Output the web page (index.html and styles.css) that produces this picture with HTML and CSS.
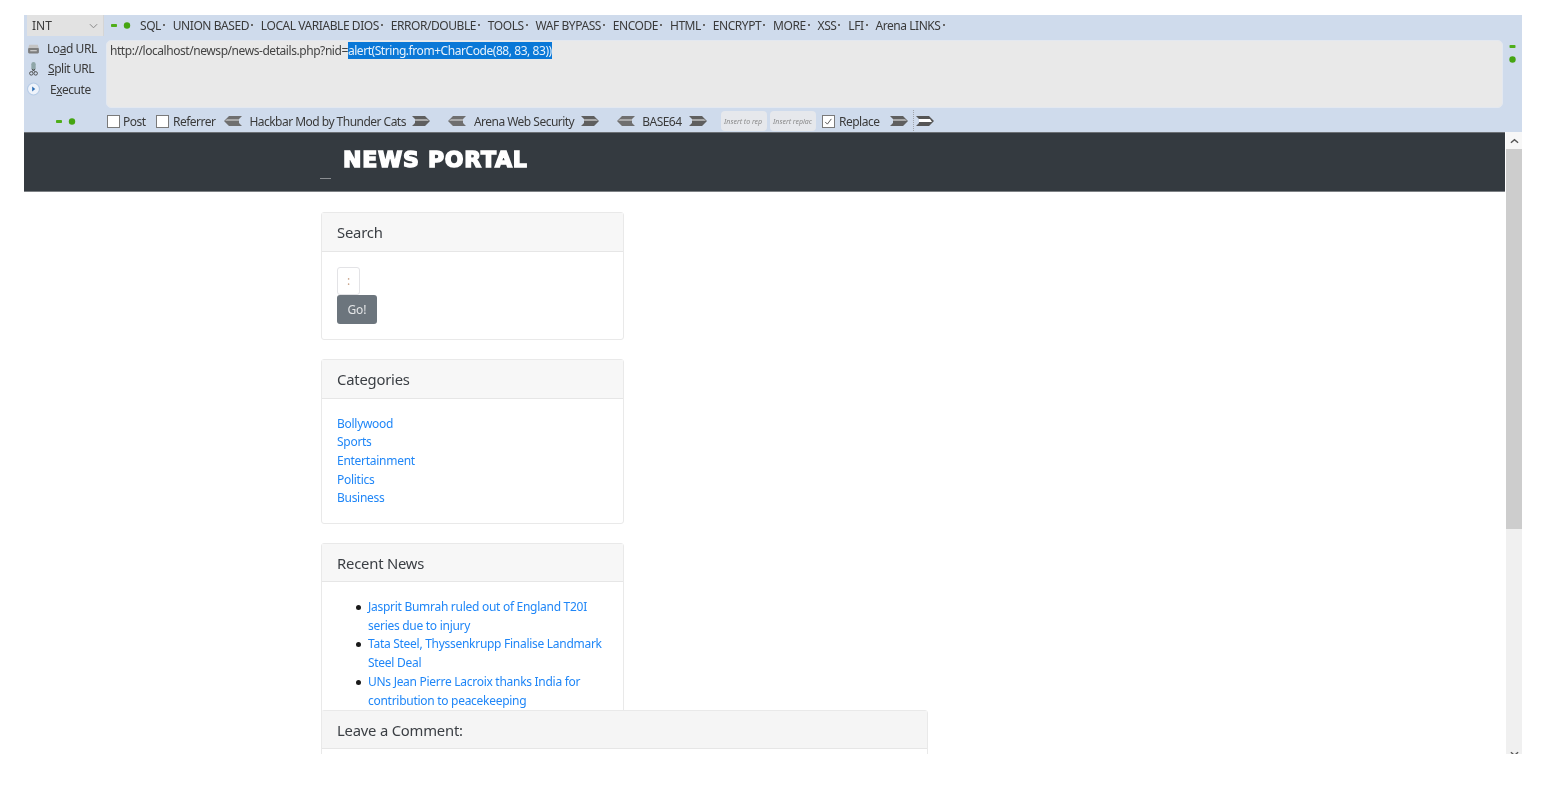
FILE: index.html
```html
<!DOCTYPE html>
<html lang="en">
<head>
<meta charset="utf-8">
<title>News Portal</title>
<link rel="stylesheet" href="styles.css">
</head>
<body>
<svg class="defs" width="0" height="0" aria-hidden="true">
  <symbol id="chev-l" viewBox="0 0 18 10"><path d="M5 0H18L15 3V7L18 10H5L0 5Z" fill="#6f6f6f"/><path d="M3 3H15V5H1Z" fill="#a9a9a9"/></symbol>
  <symbol id="chev-r" viewBox="0 0 18 10"><path d="M0 0H13L18 5L13 10H0L3 7V3Z" fill="#5f5f5f"/><path d="M3 3H15L17 5H3Z" fill="#a9a9a9"/></symbol>
  <symbol id="chev-w" viewBox="0 0 18 10"><path d="M0 0H13L18 5L13 10H0L3 7V3Z" fill="#555"/><path d="M3 3H14L16 6H3Z" fill="#fff"/></symbol>
  <symbol id="dots" viewBox="0 0 20 7"><rect x="0" y="2" width="6" height="3" rx=".8" fill="#4fae1a"/><circle cx="16" cy="3.500" r="3.200" fill="#45a512"/></symbol>
  <symbol id="dots-v" viewBox="0 0 7 20"><rect x=".5" y="0" width="6" height="3" rx=".8" fill="#4fae1a"/><circle cx="3.500" cy="14.500" r="3.200" fill="#45a512"/></symbol>
</svg>
<div class="window">
  <div class="hackbar">
    <div class="row-menu">
      <div class="select">INT<svg class="select-arrow" viewBox="0 0 10 6"><path d="M1 1L5 5L9 1" fill="none" stroke="#888" stroke-width="1.100"/></svg></div>
      <svg class="dots"><use href="#dots"/></svg>
      <nav class="menu">
        <span class="menu-item">SQL</span><span class="menu-item">UNION BASED</span><span class="menu-item">LOCAL VARIABLE DIOS</span><span class="menu-item">ERROR/DOUBLE</span><span class="menu-item">TOOLS</span><span class="menu-item">WAF BYPASS</span><span class="menu-item">ENCODE</span><span class="menu-item">HTML</span><span class="menu-item">ENCRYPT</span><span class="menu-item">MORE</span><span class="menu-item">XSS</span><span class="menu-item">LFI</span><span class="menu-item">Arena LINKS</span>
      </nav>
    </div>
    <div class="row-url">
      <div class="actions">
        <div class="action"><svg class="action-icon" viewBox="0 0 12 12"><path d="M2 3H10L11 7H1Z" fill="#c4c4c4"/><rect x="1" y="6" width="10" height="5" rx="1" fill="#7d7d7d"/><rect x="3" y="8" width="6" height="1" fill="#d8d8d8"/></svg><span class="action-text load">Lo<u>a</u>d URL</span></div>
        <div class="action"><svg class="action-icon" viewBox="0 0 12 16"><rect x="3.500" y="0" width="5" height="9" rx="2.500" fill="#8fa6a8"/><circle cx="3.500" cy="13" r="2" fill="none" stroke="#444"/><circle cx="8.500" cy="13" r="2" fill="none" stroke="#444"/><path d="M4 11L8 8M8 11L4 8" stroke="#444"/></svg><span class="action-text split"><u>S</u>plit URL</span></div>
        <div class="action"><svg class="action-icon" viewBox="0 0 12 12"><circle cx="6" cy="6" r="5.500" fill="#eef3fb" stroke="#b5cbe6"/><path d="M4.800 3.800L7.600 6L4.800 8.200Z" fill="#2f6fb5"/></svg><span class="action-text execute">E<u>x</u>ecute</span></div>
      </div>
      <div class="url-box"><span>http://localhost/newsp/news-details.php?nid=</span><span class="selected">alert(String.from+CharCode(88, 83, 83))</span></div>
      <svg class="dots-v"><use href="#dots-v"/></svg>
    </div>
    <div class="row-tools">
      <svg class="dots tools-dots"><use href="#dots"/></svg>
      <span class="check"></span><span class="tool-label post">Post</span>
      <span class="check"></span><span class="tool-label referrer">Referrer</span>
      <svg class="chev"><use href="#chev-l"/></svg><span class="tool-label group">Hackbar Mod by Thunder Cats</span><svg class="chev"><use href="#chev-r"/></svg>
      <svg class="chev c3"><use href="#chev-l"/></svg><span class="tool-label group arena">Arena Web Security</span><svg class="chev"><use href="#chev-r"/></svg>
      <svg class="chev c3"><use href="#chev-l"/></svg><span class="tool-label group base">BASE64</span><svg class="chev"><use href="#chev-r"/></svg>
      <span class="insert first">Insert to rep</span><span class="insert">Insert replac</span>
      <span class="check checked"><svg viewBox="0 0 12 12"><path d="M2.500 6.500L5 9L9.500 3" fill="none" stroke="#555" stroke-width="1.100"/></svg></span><span class="tool-label replace">Replace</span>
      <svg class="chev c4"><use href="#chev-r"/></svg><span class="sep"></span><svg class="chev"><use href="#chev-w"/></svg>
    </div>
  </div>
  <div class="viewport">
    <div class="page">
      <header class="site-header"><span class="broken"></span><span class="brand">NEWS PORTAL</span></header>
      <main class="content">
        <aside class="sidebar">
          <section class="card">
            <h5 class="card-header">Search</h5>
            <div class="card-body search-body">
              <div class="search-input"><span>:</span></div>
              <button class="go">Go!</button>
            </div>
          </section>
          <section class="card">
            <h5 class="card-header">Categories</h5>
            <div class="card-body">
              <a class="link block" href="#">Bollywood</a>
              <a class="link block" href="#">Sports</a>
              <a class="link block" href="#">Entertainment</a>
              <a class="link block" href="#">Politics</a>
              <a class="link block" href="#">Business</a>
            </div>
          </section>
          <section class="card">
            <h5 class="card-header">Recent News</h5>
            <div class="card-body">
              <ul class="news">
                <li><a class="link" href="#">Jasprit Bumrah ruled out of England T20I series due to injury</a></li>
                <li><a class="link" href="#">Tata Steel, Thyssenkrupp Finalise Landmark Steel Deal</a></li>
                <li><a class="link" href="#">UNs Jean Pierre Lacroix thanks India for contribution to peacekeeping</a></li>
              </ul>
            </div>
          </section>
        </aside>
        <section class="card comment">
          <h5 class="card-header">Leave a Comment:</h5>
        </section>
      </main>
    </div>
    <div class="scrollbar">
      <div class="arrow"><svg viewBox="0 0 10 6"><path d="M1 5L5 1.500L9 5" fill="none" stroke="#555" stroke-width="1.500"/></svg></div>
      <div class="thumb"></div>
      <div class="track"></div>
      <div class="arrow-bottom"><svg viewBox="0 0 10 6"><path d="M1 1L5 4.500L9 1" fill="none" stroke="#555" stroke-width="1.500"/></svg></div>
    </div>
  </div>
</div>
</body>
</html>
```
FILE: styles.css
```css
* { box-sizing: border-box; }
html, body { margin: 0; height: 100%; background: #fff; }
body {
  padding: 15px 27px 0 24px;
  font-family: "Noto Sans", "Open Sans", sans-serif;
  font-size: 12px;
  color: #3a3a3a;
  overflow: hidden;
  filter: blur(.35px);
}
.defs { position: absolute; }
.window { height: 739px; display: flex; flex-direction: column; }

.hackbar { height: 117px; background: #cfdbec; flex: none; display: flex; flex-direction: column; }
.row-menu { height: 24px; display: flex; align-items: flex-start; padding-left: 3px; flex: none; }
.select {
  width: 77px; height: 21px; background: #e2e2e2; border-right: 1px solid #d5d5d5;
  display: flex; align-items: center; justify-content: space-between; padding: 0 5px; font-size: 12px;
}
.select-arrow { width: 9px; height: 6px; }
.dots { width: 20px; height: 7px; flex: none; }
.row-menu .dots { margin: 7px 9px 0 7px; }
.menu { display: flex; gap: 7.850px; height: 21px; letter-spacing: -.44px; white-space: nowrap; }
.menu-item { display: flex; align-items: center; gap: 2px; }
.menu-item::after { content: ""; width: 2px; height: 2px; background: #666; margin-top: -2px; }

.row-url { height: 70px; display: flex; flex: none; }
.actions { width: 82px; flex: none; margin-top: -1px; display: flex; flex-direction: column; }
.action { height: 20.500px; display: flex; align-items: center; }
.action-icon { width: 13px; height: 14px; margin-left: 3px; flex: none; }
.action-text { letter-spacing: -.45px; }
.load { margin-left: 7px; }
.split { margin-left: 8px; }
.execute { margin-left: 10px; }
.url-box {
  flex: 1; margin-top: 1px; height: 68px; background: #e9e9e9; border: 1px solid #e3e8f0; border-radius: 5px;
  padding: 1px 3px; font-size: 12px; letter-spacing: -.44px; white-space: nowrap; color: #444;
}
.selected { background: #0a78d7; color: #e8f2fb; display: inline-block; }
.dots-v { width: 7px; height: 20px; margin: 6px 6px 0 6px; flex: none; }

.row-tools { height: 23px; padding-top: 1px; display: flex; align-items: center; flex: none; }
.tools-dots { margin-left: 32px; margin-right: 31px; }
.check { width: 12.500px; height: 13px; background: #fff; border: 1px solid #7a7a7a; flex: none; display: block; }
.check svg { display: block; width: 10.500px; height: 11px; }
.tool-label { letter-spacing: -.52px; white-space: nowrap; }
.post { margin: 0 10.500px 0 3.500px; }
.referrer { margin: 0 9px 0 4.500px; }
.group { margin: 0 6px 0 7px; }
.group.arena { margin: 0 7px 0 8px; }
.group.base { margin-right: 7.500px; }
.replace { margin: 0 10.500px 0 4.500px; }
.chev { width: 18px; height: 10px; flex: none; margin-top: -1px; }
.c3 { margin-left: 18px; }
.c4 { margin-right: 5px; }
.sep { width: 1px; height: 23px; border-left: 1px dotted #a0a4aa; margin-right: 2px; }
.insert {
  width: 46px; height: 20px; margin-left: 3px; background: #e6e8ec; border-radius: 4px; overflow: hidden;
  font-size: 7px; font-style: italic; color: #8a8a8a; display: flex; align-items: center; padding-left: 3px; white-space: nowrap; flex: none;
}
.insert.first { margin-left: 14px; }
.insert + .check { margin-left: 6px; }

.viewport { flex: 1; min-height: 0; display: flex; overflow: hidden; }
.page { width: 1481px; flex: none; overflow: hidden; position: relative; color: #212529; }
.site-header {
  height: 60px; background: #343a40; border-top: 1px solid #6b6f74; border-bottom: 1px solid #7c8084;
  display: flex; align-items: center; padding-left: 296px; position: relative;
}
.broken { position: absolute; left: 296px; top: 45px; width: 11px; height: 1px; background: #8b8e92; }
.brand {
  margin-left: 23px; margin-top: -6px; font-family: "DejaVu Sans", sans-serif; font-weight: 700; font-size: 22px;
  color: #fff; letter-spacing: .75px; -webkit-text-stroke: 1.500px #fff; white-space: nowrap;
}
.content { padding: 20px 0 0 297px; position: relative; }
.sidebar { width: 303px; }
.card { border: 1px solid #e9e9e9; border-radius: 3px; background: #fff; margin-bottom: 19px; }
.card-header {
  margin: 0; height: 38.500px; padding: 1px 15px 0; display: flex; align-items: center; font-weight: 400; font-size: 14.800px;
  letter-spacing: -.2px; background: #f7f7f7; border-bottom: 1px solid #e6e6e6; color: #3b3f44;
}
.card-body { padding: 16px 15px 14.500px; font-size: 12px; line-height: 18.700px; letter-spacing: -.28px; }
.card-body.search-body { padding: 15.500px 15px 15px; }
.search-input {
  width: 23px; height: 28px; border: 1px solid #e3e3e6; border-radius: 3px; display: flex; align-items: center; justify-content: center; color: #c9a58c;
}
.go {
  display: block; width: 40px; height: 29px; border: 0; border-radius: 3px; background: #6c757d; color: #e3e5e7;
  font: inherit; padding: 1px 0 0;
}
.link { color: #1f86f7; text-decoration: none; }
.block { display: block; }
.news { margin: 0; padding: 0 0 0 31px; list-style: none; }
.news li { position: relative; }
.news li::before { content: ""; position: absolute; left: -12px; top: 7px; width: 5px; height: 5px; border-radius: 50%; background: #1a1a1a; }
.comment { position: absolute; left: 297px; top: 518px; width: 607px; height: 60px; margin: 0; }
.comment .card-header { height: 37.500px; background: #f5f5f5; }

.scrollbar { width: 16px; margin-left: 1px; flex: none; background: #f0f0f0; display: flex; flex-direction: column; }
.arrow { height: 17px; background: #f7f7f7; display: flex; align-items: center; justify-content: center; flex: none; }
.arrow svg, .arrow-bottom svg { width: 9px; height: 6px; display: block; }
.thumb { height: 380px; background: #cdcdcd; flex: none; }
.track { flex: 1; }
.arrow-bottom { height: 3px; overflow: hidden; display: flex; justify-content: center; flex: none; }
```
